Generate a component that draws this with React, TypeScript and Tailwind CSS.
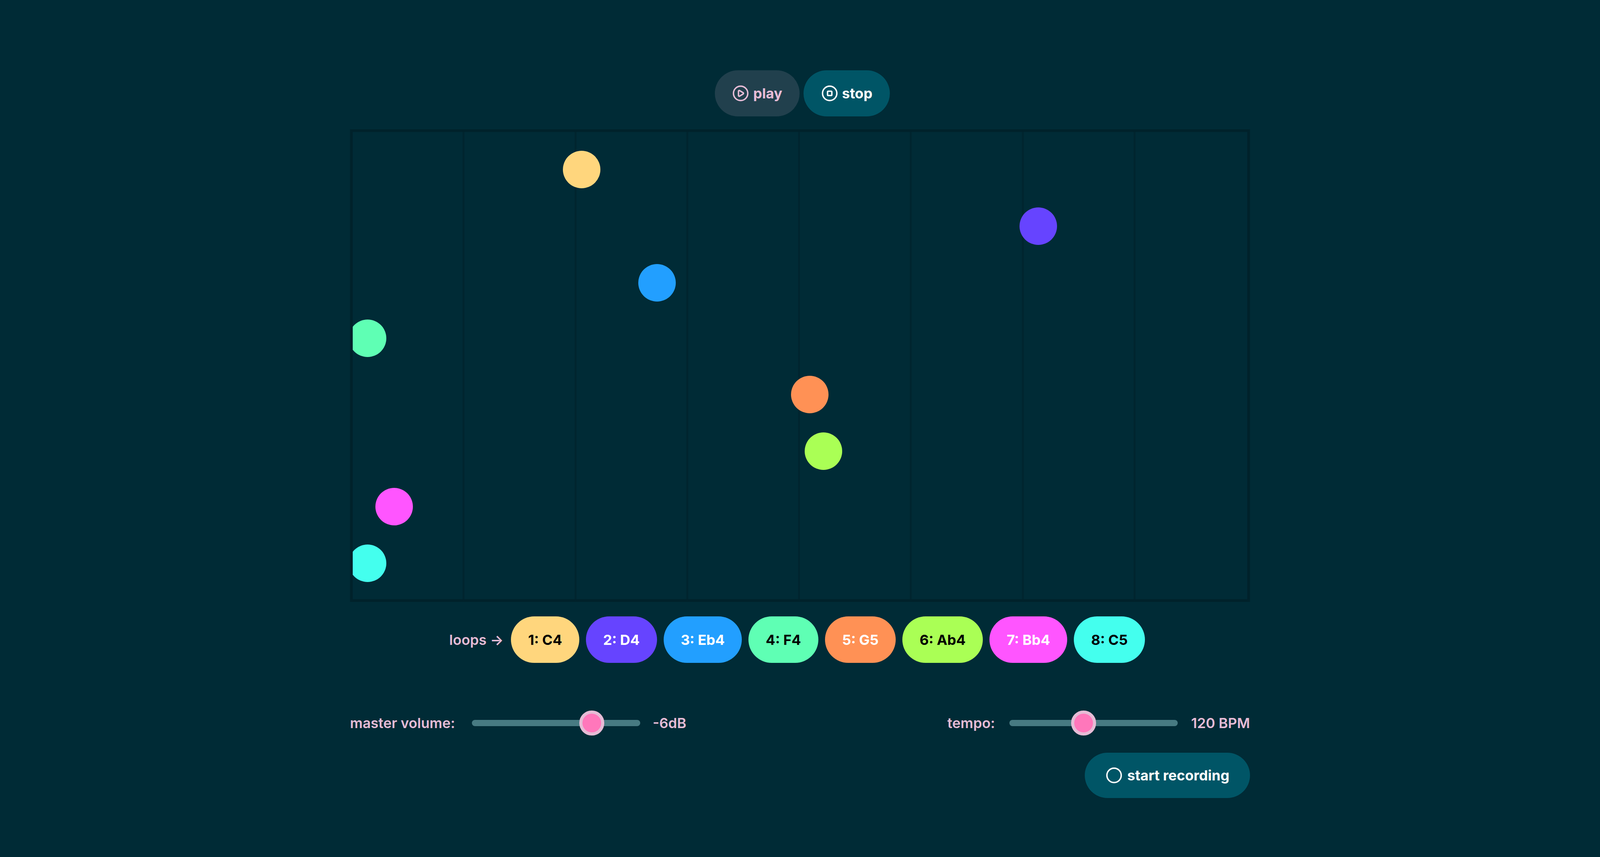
import React from "react";
import { CirclePlay, CircleStop, Circle } from "lucide-react";

const loops = [
  { label: "1: C4", bg: "bg-[#ffd67d]", fg: "text-black" },
  { label: "2: D4", bg: "bg-[#6644ff]", fg: "text-white" },
  { label: "3: Eb4", bg: "bg-[#229fff]", fg: "text-white" },
  { label: "4: F4", bg: "bg-[#5fffb4]", fg: "text-black" },
  { label: "5: G5", bg: "bg-[#ff9155]", fg: "text-white" },
  { label: "6: Ab4", bg: "bg-[#aaff55]", fg: "text-black" },
  { label: "7: Bb4", bg: "bg-[#ff55ff]", fg: "text-white" },
  { label: "8: C5", bg: "bg-[#44ffee]", fg: "text-black" },
];

const dots = [
  { x: 538, y: 48, c: "#ffd67d" },
  { x: 1707, y: 193, c: "#6644ff" },
  { x: 731, y: 338, c: "#229fff" },
  { x: -10, y: 480, c: "#5fffb4" },
  { x: 1122, y: 624, c: "#ff9155" },
  { x: 1157, y: 769, c: "#aaff55" },
  { x: 58, y: 911, c: "#ff55ff" },
  { x: -10, y: 1056, c: "#44ffee" },
];

function Slider({ track, pos }: { track: number; pos: number }) {
  return (
    <div className="relative h-[64px] flex items-center" style={{ width: track }}>
      <div className="w-full h-[16px] rounded-full bg-[#477a82]" />
      <div
        className="absolute top-0 w-[64px] h-[64px] rounded-full bg-[#ff77bb] border-[8px] border-[#e6bcd6]"
        style={{ left: pos - 32 }}
      />
    </div>
  );
}

export default function App() {
  return (
    <div
      className="w-full h-screen overflow-hidden bg-[#002b36] flex flex-col items-center pt-[180px] font-semibold text-[36px]"
      style={{ fontFamily: "Inter, 'Noto Sans', sans-serif" }}
    >
      <div className="w-[2304px] flex flex-col">
        <div className="flex justify-center gap-[10px] pl-[12px]">
          <button className="h-[118px] w-[217px] rounded-full bg-[#21404d] text-[#e6bcd6] flex items-center justify-center gap-[10px] font-bold">
            <CirclePlay size={44} strokeWidth={2} />
            play
          </button>
          <button className="h-[118px] w-[221px] rounded-full bg-[#005566] text-white flex items-center justify-center gap-[10px] font-bold">
            <CircleStop size={44} strokeWidth={2} />
            stop
          </button>
        </div>

        <div className="mt-[33px] h-[1210px] border-[7px] border-[#00222b] relative overflow-hidden grid grid-cols-8">
          {Array.from({ length: 8 }).map((_, i) => (
            <div key={i} className={i < 7 ? "border-r-[5px] border-[#00252f]" : ""} />
          ))}
          {dots.map((d, i) => (
            <div
              key={i}
              className="absolute w-[96px] h-[96px] rounded-full"
              style={{ left: d.x, top: d.y, background: d.c }}
            />
          ))}
        </div>

        <div className="mt-[37px] flex items-center justify-center gap-[17px] pr-[15px]">
          <span className="text-[#e6bcd6] mr-[2px]">loops →</span>
          {loops.map((l) => (
            <div key={l.label} className={`h-[119px] px-[44px] rounded-full flex items-center font-bold ${l.bg} ${l.fg}`}>
              {l.label}
            </div>
          ))}
        </div>

        <div className="mt-[122px] flex items-center justify-between text-[#e6bcd6]">
          <div className="flex items-center">
            <span className="w-[312px]">master volume:</span>
            <Slider track={431} pos={307} />
            <span className="ml-[32px]">-6dB</span>
          </div>
          <div className="flex items-center">
            <span className="w-[159px]">tempo:</span>
            <Slider track={431} pos={190} />
            <span className="ml-[34px]">120 BPM</span>
          </div>
        </div>

        <div className="mt-[44px] flex justify-end">
          <button className="h-[116px] w-[423px] rounded-full bg-[#005566] text-white flex items-center justify-center gap-[12px] font-bold">
            <Circle size={44} strokeWidth={2} />
            start recording
          </button>
        </div>
      </div>
    </div>
  );
}
